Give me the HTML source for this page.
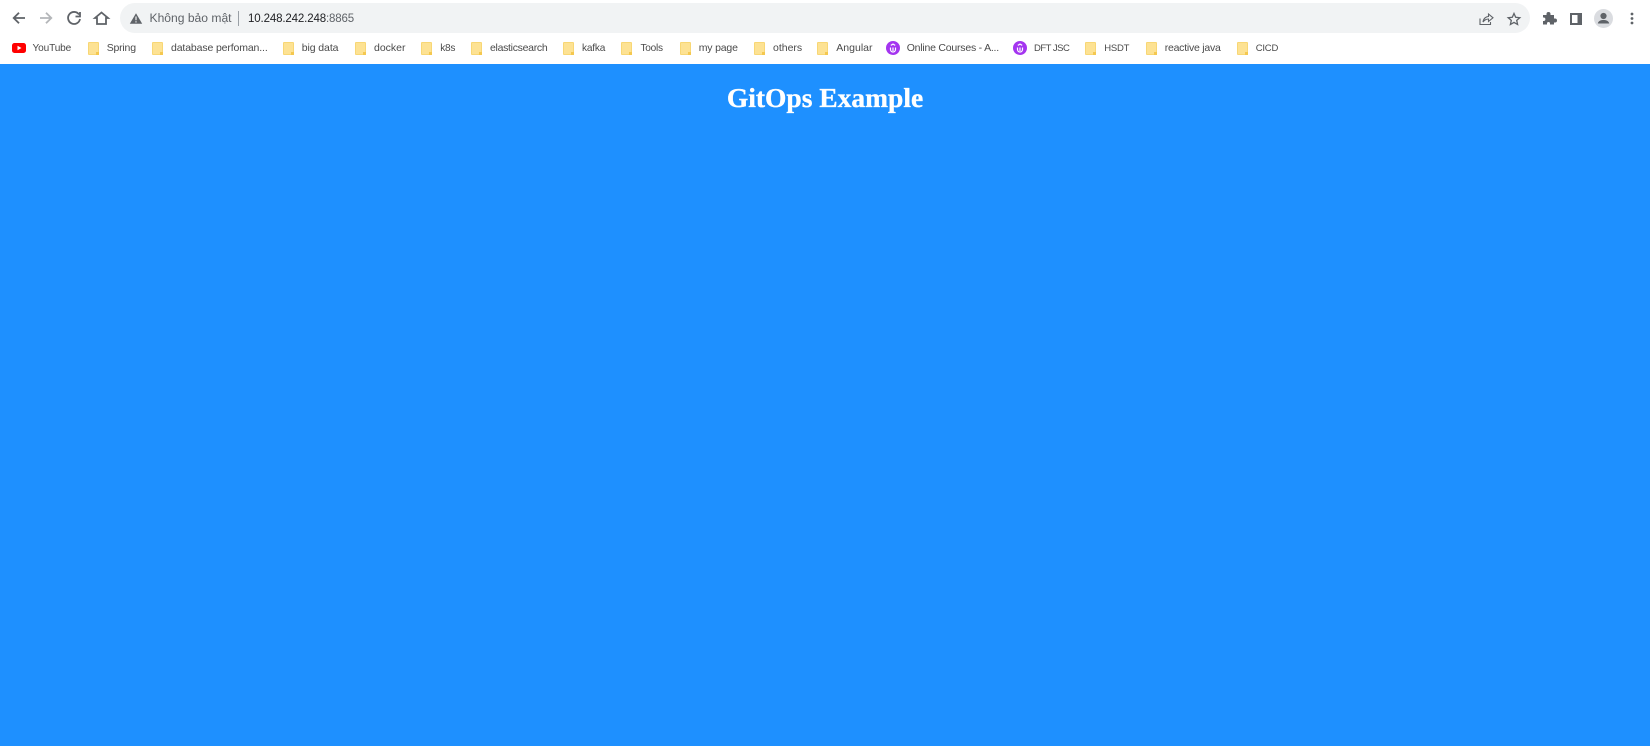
<!DOCTYPE html>
<html><head><meta charset="utf-8"><style>
html,body{margin:0;padding:0;width:1650px;height:746px;overflow:hidden;background:#1e90ff}
#chrome{position:absolute;left:0;top:0;width:1650px;height:64px;background:#fff}
#bar{position:absolute;left:120px;top:3px;width:1410px;height:30px;border-radius:15px;background:#f1f3f4}
.t{position:absolute;font-family:"Liberation Sans",Arial,sans-serif;white-space:nowrap;filter:blur(.3px)}
.b{font-size:10.5px;color:#4a4a4a;top:41px;line-height:14px}
.c{font-size:9.5px;top:42px}
.d{font-size:10.1px;top:42px}
.f{position:absolute;top:42px;width:10.5px;height:12.5px;background:#fde293;border:1px solid #f8d775;box-sizing:border-box;border-radius:1px;filter:blur(.3px)}
.f:after{content:"";position:absolute;right:-1px;bottom:-1px;width:3px;height:3px;background:#f5c84f}
svg{position:absolute;overflow:visible}
h1{position:absolute;left:0;top:81px;margin:0;width:1650px;text-align:center;font:bold 27.5px/34px "Liberation Serif","Times New Roman",serif;color:#fff;-webkit-text-stroke:.35px #fff;filter:blur(.3px)}
</style></head><body>
<div id="chrome"></div>
<div id="bar"></div>
<svg style="left:0;top:0" width="130" height="36" fill="none" stroke="#5f6368" stroke-width="1.8">
<path d="M25 18H14M19 12.700 13.700 18l5.300 5.300"/>
<path d="M40 18h11M46 12.700 51.300 18 46 23.300" stroke="#b4b6b9"/>
<path d="M79 14.500A6 6 0 1 0 80 19M80 12v4.500h-4.500"/>
<path d="M102 13 95.500 18.500 H97.500V24.500H106.500V18.500H108.500Z" transform="translate(-.5,-.5)"/>
</svg>
<svg style="left:130px;top:12.500px" width="13" height="11"><path d="M6 .2 12.200 10.800H-.200Z" fill="#5f6368"/><path d="M6 3.500v3.800M6 8.200v1.300" stroke="#fff" stroke-width="1.100"/></svg>
<div class="t" style="left:149.500px;top:11px;font-size:12.100px;line-height:15px;color:#5f6368">Không bảo mật</div>
<div style="position:absolute;left:238px;top:11px;width:1px;height:15px;background:#9aa0a6"></div>
<div class="t" style="left:248px;top:12px;font-size:11.500px;line-height:15px;letter-spacing:-.14px;color:#202124">10.248.242.248<span style="color:#5f6368">:8865</span></div>
<svg style="left:1478px;top:11px" width="16" height="16" fill="none" stroke="#5f6368" stroke-width="1.100"><path d="M2 7.500V13.500H12.500V11"/><path d="M5 11C5.500 7.500 8 5.500 10.500 5.500V3L15 6.800 10.500 10.500V8C8.500 8 6.500 9 5 11Z"/></svg>
<svg style="left:1507px;top:11.500px" width="15" height="15" fill="none" stroke="#5f6368" stroke-width="1.300"><path d="M7 1.500 8.700 5.300 12.800 5.700 9.700 8.400 10.600 12.500 7 10.400 3.400 12.500 4.300 8.400 1.200 5.700 5.300 5.300Z"/></svg>
<svg style="left:1542px;top:11px" width="14" height="14" fill="#5f6368"><path d="M1 4H4.500V3A2 2 0 0 1 8.500 3V4H12V7.500H13A2 2 0 0 1 13 11.500H12V13.500H8V12.500A1.500 1.500 0 0 0 5 12.500V13.500H1V10H2A1.800 1.800 0 0 0 2 6.500H1Z"/></svg>
<svg style="left:1570px;top:12.500px" width="13" height="13" fill="none"><rect x="1" y="1" width="10" height="10" stroke="#5f6368" stroke-width="2"/><rect x="7.500" y="1" width="3.500" height="10" fill="#5f6368"/></svg>
<svg style="left:1594px;top:9px" width="20" height="20"><circle cx="9.500" cy="9.500" r="9.500" fill="#dadce0"/><circle cx="9.500" cy="7" r="3.100" fill="#5f6368"/><path d="M3.800 14.500C4.200 11.800 7 11 9.500 11S14.800 11.800 15.200 14.500Z" fill="#5f6368"/></svg>
<svg style="left:1630px;top:11px" width="4" height="14" fill="#5f6368"><circle cx="2" cy="3" r="1.400"/><circle cx="2" cy="7.500" r="1.400"/><circle cx="2" cy="12" r="1.400"/></svg>
<svg style="left:12px;top:43px" width="14" height="10"><rect width="14" height="10" rx="2.500" fill="#f00"/><path d="M5.500 2.800 9.500 5 5.500 7.200Z" fill="#fff"/></svg>
<div class="t b d" style="left:32.500px;letter-spacing:-.15px">YouTube</div>
<div class="f" style="left:88px"></div><div class="t b" style="left:106.700px;letter-spacing:-.2px">Spring</div>
<div class="f" style="left:152px"></div><div class="t b" style="left:171px;letter-spacing:-.13px">database perfoman...</div>
<div class="f" style="left:283px"></div><div class="t b" style="left:301.700px;letter-spacing:-.08px">big data</div>
<div class="f" style="left:355px"></div><div class="t b" style="left:374px">docker</div>
<div class="f" style="left:421px"></div><div class="t b d" style="left:440.300px;letter-spacing:-.3px">k8s</div>
<div class="f" style="left:471px"></div><div class="t b" style="left:490px;letter-spacing:-.3px">elasticsearch</div>
<div class="f" style="left:563px"></div><div class="t b d" style="left:582px;letter-spacing:-.2px">kafka</div>
<div class="f" style="left:621px"></div><div class="t b d" style="left:640.500px;letter-spacing:-.25px">Tools</div>
<div class="f" style="left:680px"></div><div class="t b" style="left:698.700px;letter-spacing:-.17px">my page</div>
<div class="f" style="left:754px"></div><div class="t b" style="left:773px">others</div>
<div class="f" style="left:817px"></div><div class="t b" style="left:836.300px">Angular</div>
<svg style="left:886px;top:41px" width="14" height="14"><circle cx="7" cy="7" r="7" fill="#a435f0"/><path d="M4.500 6.500V8.500A2.500 2.500 0 0 0 9.500 8.500V6.500M7 6.500V10M4.800 4.400 7 3.100 9.200 4.400" fill="none" stroke="#fff" stroke-width="1.200"/></svg>
<div class="t b" style="left:906.700px;letter-spacing:-.22px">Online Courses - A...</div>
<svg style="left:1013px;top:41px" width="14" height="14"><circle cx="7" cy="7" r="7" fill="#a435f0"/><path d="M4.500 6.500V8.500A2.500 2.500 0 0 0 9.500 8.500V6.500M7 6.500V10M4.800 4.400 7 3.100 9.200 4.400" fill="none" stroke="#fff" stroke-width="1.200"/></svg>
<div class="t b c" style="left:1034px;letter-spacing:-.5px">DFT JSC</div>
<div class="f" style="left:1085px"></div><div class="t b c" style="left:1104.300px;letter-spacing:-.25px">HSDT</div>
<div class="f" style="left:1146px"></div><div class="t b" style="left:1164.700px;letter-spacing:-.23px">reactive java</div>
<div class="f" style="left:1237px"></div><div class="t b c" style="left:1255.700px;letter-spacing:-.2px">CICD</div>
<h1>GitOps Example</h1>
</body></html>
